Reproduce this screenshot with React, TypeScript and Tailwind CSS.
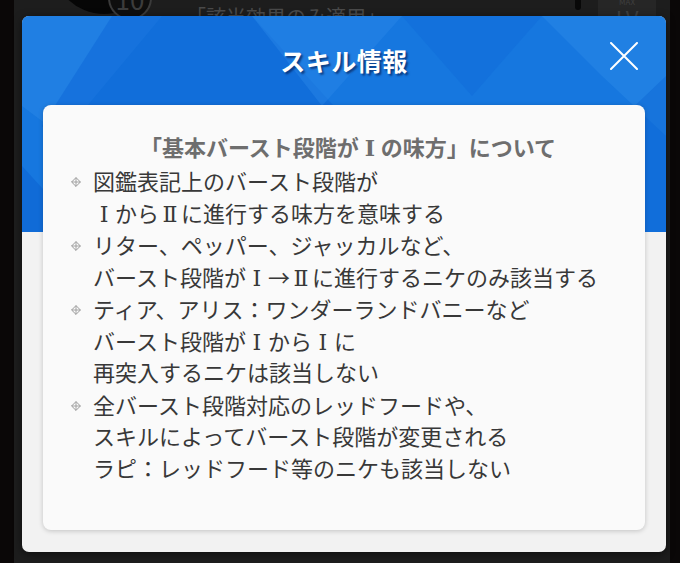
import type { ReactNode } from 'react';

const items: string[][] = [
  ['図鑑表記上のバースト段階が', 'ⅠからⅡに進行する味方を意味する'],
  ['リター、ペッパー、ジャッカルなど、', 'バースト段階がⅠ→Ⅱに進行するニケのみ該当する'],
  ['ティア、アリス：ワンダーランドバニーなど', 'バースト段階がⅠからⅠに', '再突入するニケは該当しない'],
  ['全バースト段階対応のレッドフードや、', 'スキルによってバースト段階が変更される', 'ラピ：レッドフード等のニケも該当しない'],
];

// roman numerals show in a serif face, one em wide
function withNumerals(text: string) {
  return text.split(/([ⅠⅡ])/).map((part, i) =>
    part === 'Ⅰ' || part === 'Ⅱ' ? (
      <span key={i} className="inline-block w-[1em] text-center leading-none font-['DejaVu_Serif','Noto_Sans_CJK_JP',serif]">
        {part}
      </span>
    ) : (
      part
    ),
  );
}

function Bullet() {
  return (
    <svg width="10" height="10" viewBox="0 0 10 10" className="mt-[12px] shrink-0">
      <path d="M5 0.6 L9.4 5 L5 9.4 L0.6 5 Z" fill="none" stroke="#9a9a9a" strokeWidth="1" />
      <path d="M5 0.6 V9.4 M0.6 5 H9.4" stroke="#9a9a9a" strokeWidth="0.9" />
    </svg>
  );
}

function BulletItem({ children }: { children: ReactNode }) {
  return (
    <li className="flex items-start gap-[12px]">
      <Bullet />
      <div className="text-[22px] leading-[31.5px] text-[#383838]">{children}</div>
    </li>
  );
}

function HeaderPattern() {
  return (
    <svg className="absolute inset-x-0 top-0 h-[216px] w-full" viewBox="0 0 644 216" preserveAspectRatio="none">
      <rect width="644" height="216" fill="#1677df" />
      <polygon points="0,0 140,0 40,120 0,90" fill="#2a86e6" opacity="0.55" />
      <polygon points="90,0 230,0 330,110 200,216 120,216 20,110" fill="#0c63d4" opacity="0.45" />
      <polygon points="230,0 380,0 300,90" fill="#2d8ae8" opacity="0.4" />
      <polygon points="380,0 520,0 450,80" fill="#0f68d8" opacity="0.35" />
      <polygon points="520,0 644,0 644,120 580,60" fill="#2c8be9" opacity="0.45" />
      <polygon points="560,140 644,60 644,216 600,216" fill="#0b62d3" opacity="0.4" />
      <polygon points="300,216 380,140 470,216" fill="#2585e6" opacity="0.35" />
      <polygon points="0,150 60,216 0,216" fill="#0a5fd0" opacity="0.5" />
    </svg>
  );
}

export default function App() {
  return (
    <div className="relative flex h-[563px] w-[680px] overflow-hidden bg-[#0a0707] font-['Noto_Sans_CJK_JP','Noto_Sans',sans-serif]">
      {/* game screen behind the dialog */}
      <div className="w-[14px] shrink-0" />
      <div className="flex flex-1 flex-col bg-[#1d1d1d]">
        <div className="flex h-[40px] items-start">
          <div className="relative ml-[38px] mt-[-90px] h-[104px] w-[104px] shrink-0 rounded-full bg-[#060606]">
            <div className="absolute right-[4px] bottom-[-6px] flex h-[44px] w-[44px] items-center justify-center rounded-full border-2 border-[#3a3a3a] bg-[#0e0e0e] text-[26px] text-[#3c3c3c]">
              10
            </div>
          </div>
          <div className="ml-[30px] mt-[2px] text-[20px] text-[#4a4a4a]">「該当効果のみ適用」</div>
          <div className="ml-auto h-[10px] w-[6px] rounded-b-full bg-[#080808]" />
          <div className="ml-[17px] mr-[14px] flex h-[40px] w-[58px] flex-col items-center bg-[#262626] text-[#3f3f3f]">
            <span className="mt-[-2px] text-[8px] leading-[8px]">MAX</span>
            <span className="mt-[1px] text-[22px] leading-[20px]">LV</span>
          </div>
        </div>
      </div>
      <div className="w-[10px] shrink-0" />

      {/* dialog */}
      <div className="absolute left-[22px] top-[16px] flex h-[536px] w-[644px] flex-col overflow-hidden rounded-[7px] bg-[#f2f2f2] px-[21px] pb-[22px] shadow-[0_2px_8px_rgba(0,0,0,0.5)]">
        <HeaderPattern />
        <div className="relative flex h-[89px] shrink-0 items-center justify-center">
          <h1 className="text-[25px] font-bold tracking-[0.5px] text-white [text-shadow:2px_2px_2px_rgba(0,20,70,0.6)]">
            スキル情報
          </h1>
          <button className="absolute right-[7px] top-[26px] h-[28px] w-[28px]" aria-label="閉じる">
            <svg viewBox="0 0 28 28" className="h-[28px] w-[28px]">
              <path d="M1 1 L27 27 M27 1 L1 27" stroke="white" strokeWidth="2" strokeLinecap="round" />
            </svg>
          </button>
        </div>
        <div className="relative flex-1 rounded-[8px] bg-[#fafafa] pl-[28px] pr-[20px] pt-[27px] shadow-[0_1px_5px_rgba(0,0,0,0.2)]">
          <h2 className="text-center text-[22px] font-bold leading-[28px] text-[#6e6e6e]">
            「基本バースト段階が{withNumerals('Ⅰ')}の味方」について
          </h2>
          <ul className="mt-[5px] flex flex-col gap-[1px]">
            {items.map((lines, i) => (
              <BulletItem key={i}>
                {lines.map((l, j) => (
                  <div key={j}>{withNumerals(l)}</div>
                ))}
              </BulletItem>
            ))}
          </ul>
        </div>
      </div>
    </div>
  );
}
